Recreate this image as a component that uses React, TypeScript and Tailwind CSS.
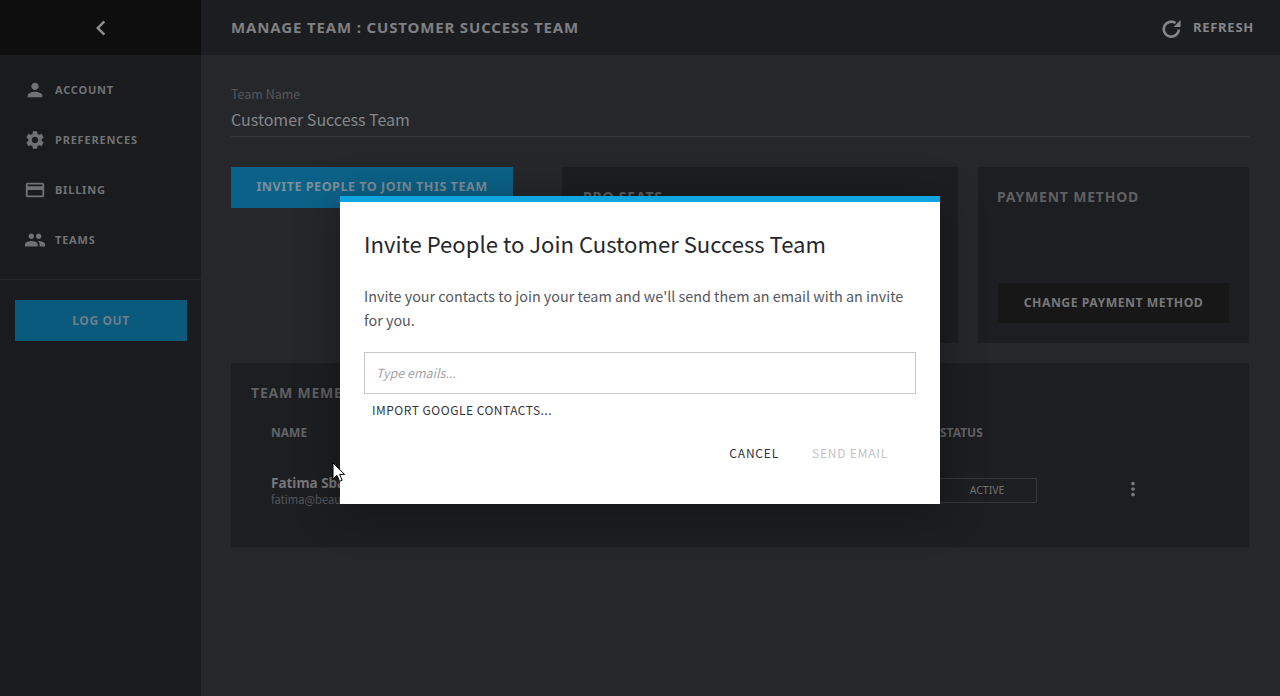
import React from 'react'
import { MdPerson, MdSettings, MdCreditCard, MdPeople, MdMoreVert, MdChevronLeft } from 'react-icons/md'

const HEAD = { fontFamily: '"Noto Sans CJK SC", "Noto Sans", sans-serif' }
const CAPS = { fontFamily: '"Noto Sans", "Open Sans", sans-serif' }

const NAV = [
  { label: 'ACCOUNT', icon: MdPerson },
  { label: 'PREFERENCES', icon: MdSettings },
  { label: 'BILLING', icon: MdCreditCard },
  { label: 'TEAMS', icon: MdPeople },
]

// ── Sidebar ──────────────────────────────────────────────────────────────────

function Sidebar() {
  return (
    <aside className="w-[201px] flex-none flex flex-col bg-[#1a1b1e]">
      <div className="h-[55px] flex-none flex items-center justify-center bg-[#0e0e0f] text-[#8c8c8e]">
        <MdChevronLeft size={30} />
      </div>
      <nav className="pt-[10px] pb-[14px] border-b border-[#26272b]">
        {NAV.map(item => {
          const Icon = item.icon
          return (
            <div key={item.label} className="h-[50px] flex items-center pl-[24px] gap-[9px] text-[#717275]">
              <Icon size={22} />
              <span style={CAPS} className="text-[11px] font-bold tracking-[0.8px]">{item.label}</span>
            </div>
          )
        })}
      </nav>
      <div className="px-[15px] pt-[20px]">
        <button style={CAPS} className="w-[172px] h-[41px] bg-[#0a5a7e] text-[#6f7f89] text-[12px] font-bold tracking-[0.6px]">
          LOG OUT
        </button>
      </div>
    </aside>
  )
}

// ── Page behind the dialog ───────────────────────────────────────────────────

function RefreshIcon() {
  return (
    <svg width="20" height="20" viewBox="0 0 20 20" fill="none">
      <path d="M16.8 11.5A7.5 7.5 0 1 1 13.6 5" stroke="currentColor" strokeWidth="2.6" />
      <path d="M18.6 2v7h-7z" fill="currentColor" />
    </svg>
  )
}

function TeamPage() {
  return (
    <main className="flex-1 flex flex-col min-w-0 bg-[#26272b]">
      <header className="h-[55px] flex-none flex items-center justify-between pl-[30px] pr-[26px] bg-[#1c1d20]">
        <h1 style={CAPS} className="text-[15px] font-bold tracking-[0.85px] text-[#7f8083]">
          MANAGE TEAM : CUSTOMER SUCCESS TEAM
        </h1>
        <div className="flex items-center gap-[11px] text-[#85868a]">
          <RefreshIcon />
          <span style={CAPS} className="text-[13px] font-bold tracking-[0.75px]">REFRESH</span>
        </div>
      </header>

      <div className="pl-[30px] pr-[31px]">
        <div className="pt-[30px] pb-[4px] border-b border-[#37383c]">
          <div style={HEAD} className="text-[12.5px] leading-[18px] text-[#55565a]">Team Name</div>
          <div style={HEAD} className="mt-[3px] text-[16px] leading-[26px] text-[#85868a]">Customer Success Team</div>
        </div>

        <div className="flex mt-[30px]">
          <button style={CAPS} className="w-[282px] h-[41px] flex-none bg-[#0b6288] text-[#7d8f9a] text-[12.6px] font-bold tracking-[0.5px]">
            INVITE PEOPLE TO JOIN THIS TEAM
          </button>
          <section className="w-[396px] h-[176px] flex-none ml-[49px] px-[21px] pt-[19px] bg-[#1d1e21]">
            <h2 style={CAPS} className="text-[14px] font-bold tracking-[0.8px] text-[#5f6063]">PRO SEATS</h2>
          </section>
          <section className="flex-1 h-[176px] ml-[20px] pl-[19px] pr-[20px] pt-[19px] flex flex-col justify-between pb-[20px] bg-[#1d1e21]">
            <h2 style={CAPS} className="text-[14px] font-bold tracking-[0.8px] text-[#5f6063]">PAYMENT METHOD</h2>
            <button style={CAPS} className="w-[231px] h-[40px] ml-[1px] bg-[#171717] text-[#77787a] text-[12.25px] font-bold tracking-[0.5px]">
              CHANGE PAYMENT METHOD
            </button>
          </section>
        </div>

        <section className="h-[184px] mt-[20px] pl-[20px] pt-[20px] bg-[#1d1e21]">
          <h2 style={CAPS} className="text-[14px] font-bold tracking-[0.8px] leading-[20px] text-[#5f6063]">TEAM MEMBERS</h2>
          <div className="grid grid-cols-[666px_100px_192px] pl-[20px] mt-[20px]">
            <div style={CAPS} className="text-[12px] leading-[20px] font-bold text-[#636467]">NAME</div>
            <div style={CAPS} className="col-span-2 pl-[3px] text-[12px] leading-[20px] font-bold text-[#636467]">STATUS</div>
            <div className="mt-[30px]">
              <div style={CAPS} className="text-[13.5px] leading-[20px] font-bold text-[#77787a]">Fatima Sbaiti</div>
              <div style={HEAD} className="text-[11.2px] leading-[13px] text-[#55565a]">fatima@beautiful.ai</div>
            </div>
            <div style={CAPS} className="mt-[35px] h-[25px] flex items-center justify-center border border-[#37383b] text-[10.5px] text-[#707174]">
              ACTIVE
            </div>
            <div className="mt-[35px] flex justify-center text-[#77787a]">
              <MdMoreVert size={22} />
            </div>
          </div>
        </section>
      </div>
    </main>
  )
}

// ── Dialog ───────────────────────────────────────────────────────────────────

function InviteDialog() {
  return (
    <div style={HEAD} className="absolute left-[340px] top-[196px] w-[600px] h-[308px] bg-white border-t-[6px] border-[#0fa6e0] px-[24px] shadow-[0_6px_40px_rgba(0,0,0,0.35)]">
      <h2 className="mt-[25px] text-[22.1px] leading-[32px] font-normal text-[#26272b]">
        Invite People to Join Customer Success Team
      </h2>
      <p className="mt-[25px] text-[14.35px] leading-[24px] text-[#55565a]">
        Invite your contacts to join your team and we'll send them an email with an invite for you.
      </p>
      <input
        readOnly
        placeholder="Type emails..."
        style={HEAD}
        className="block w-full h-[42px] mt-[20px] px-[11px] pb-[2px] border border-[#c8c8c8] text-[12.5px] italic outline-none placeholder:text-[#a3a3a6]"
      />
      <div className="mt-[6px] pl-[8px] text-[12px] leading-[20px] tracking-[0.5px] text-[#333438]">
        IMPORT GOOGLE CONTACTS...
      </div>
      <div className="flex justify-end gap-[33px] mt-[23px] pr-[28px] text-[12px] leading-[20px] tracking-[0.8px]">
        <span className="text-[#333438]">CANCEL</span>
        <span className="text-[#c3c3c5]">SEND EMAIL</span>
      </div>
    </div>
  )
}

function Cursor() {
  return (
    <svg className="absolute left-[332px] top-[462px]" width="13" height="21" viewBox="0 0 13 21">
      <path d="M1 1v16l4-3.6 2.6 6 2.6-1.1-2.6-5.9H12.6z" fill="#fff" stroke="#000" strokeWidth="1" />
    </svg>
  )
}

export default function App() {
  return (
    <div className="relative h-[696px] flex overflow-hidden">
      <Sidebar />
      <TeamPage />
      <InviteDialog />
      <Cursor />
    </div>
  )
}
